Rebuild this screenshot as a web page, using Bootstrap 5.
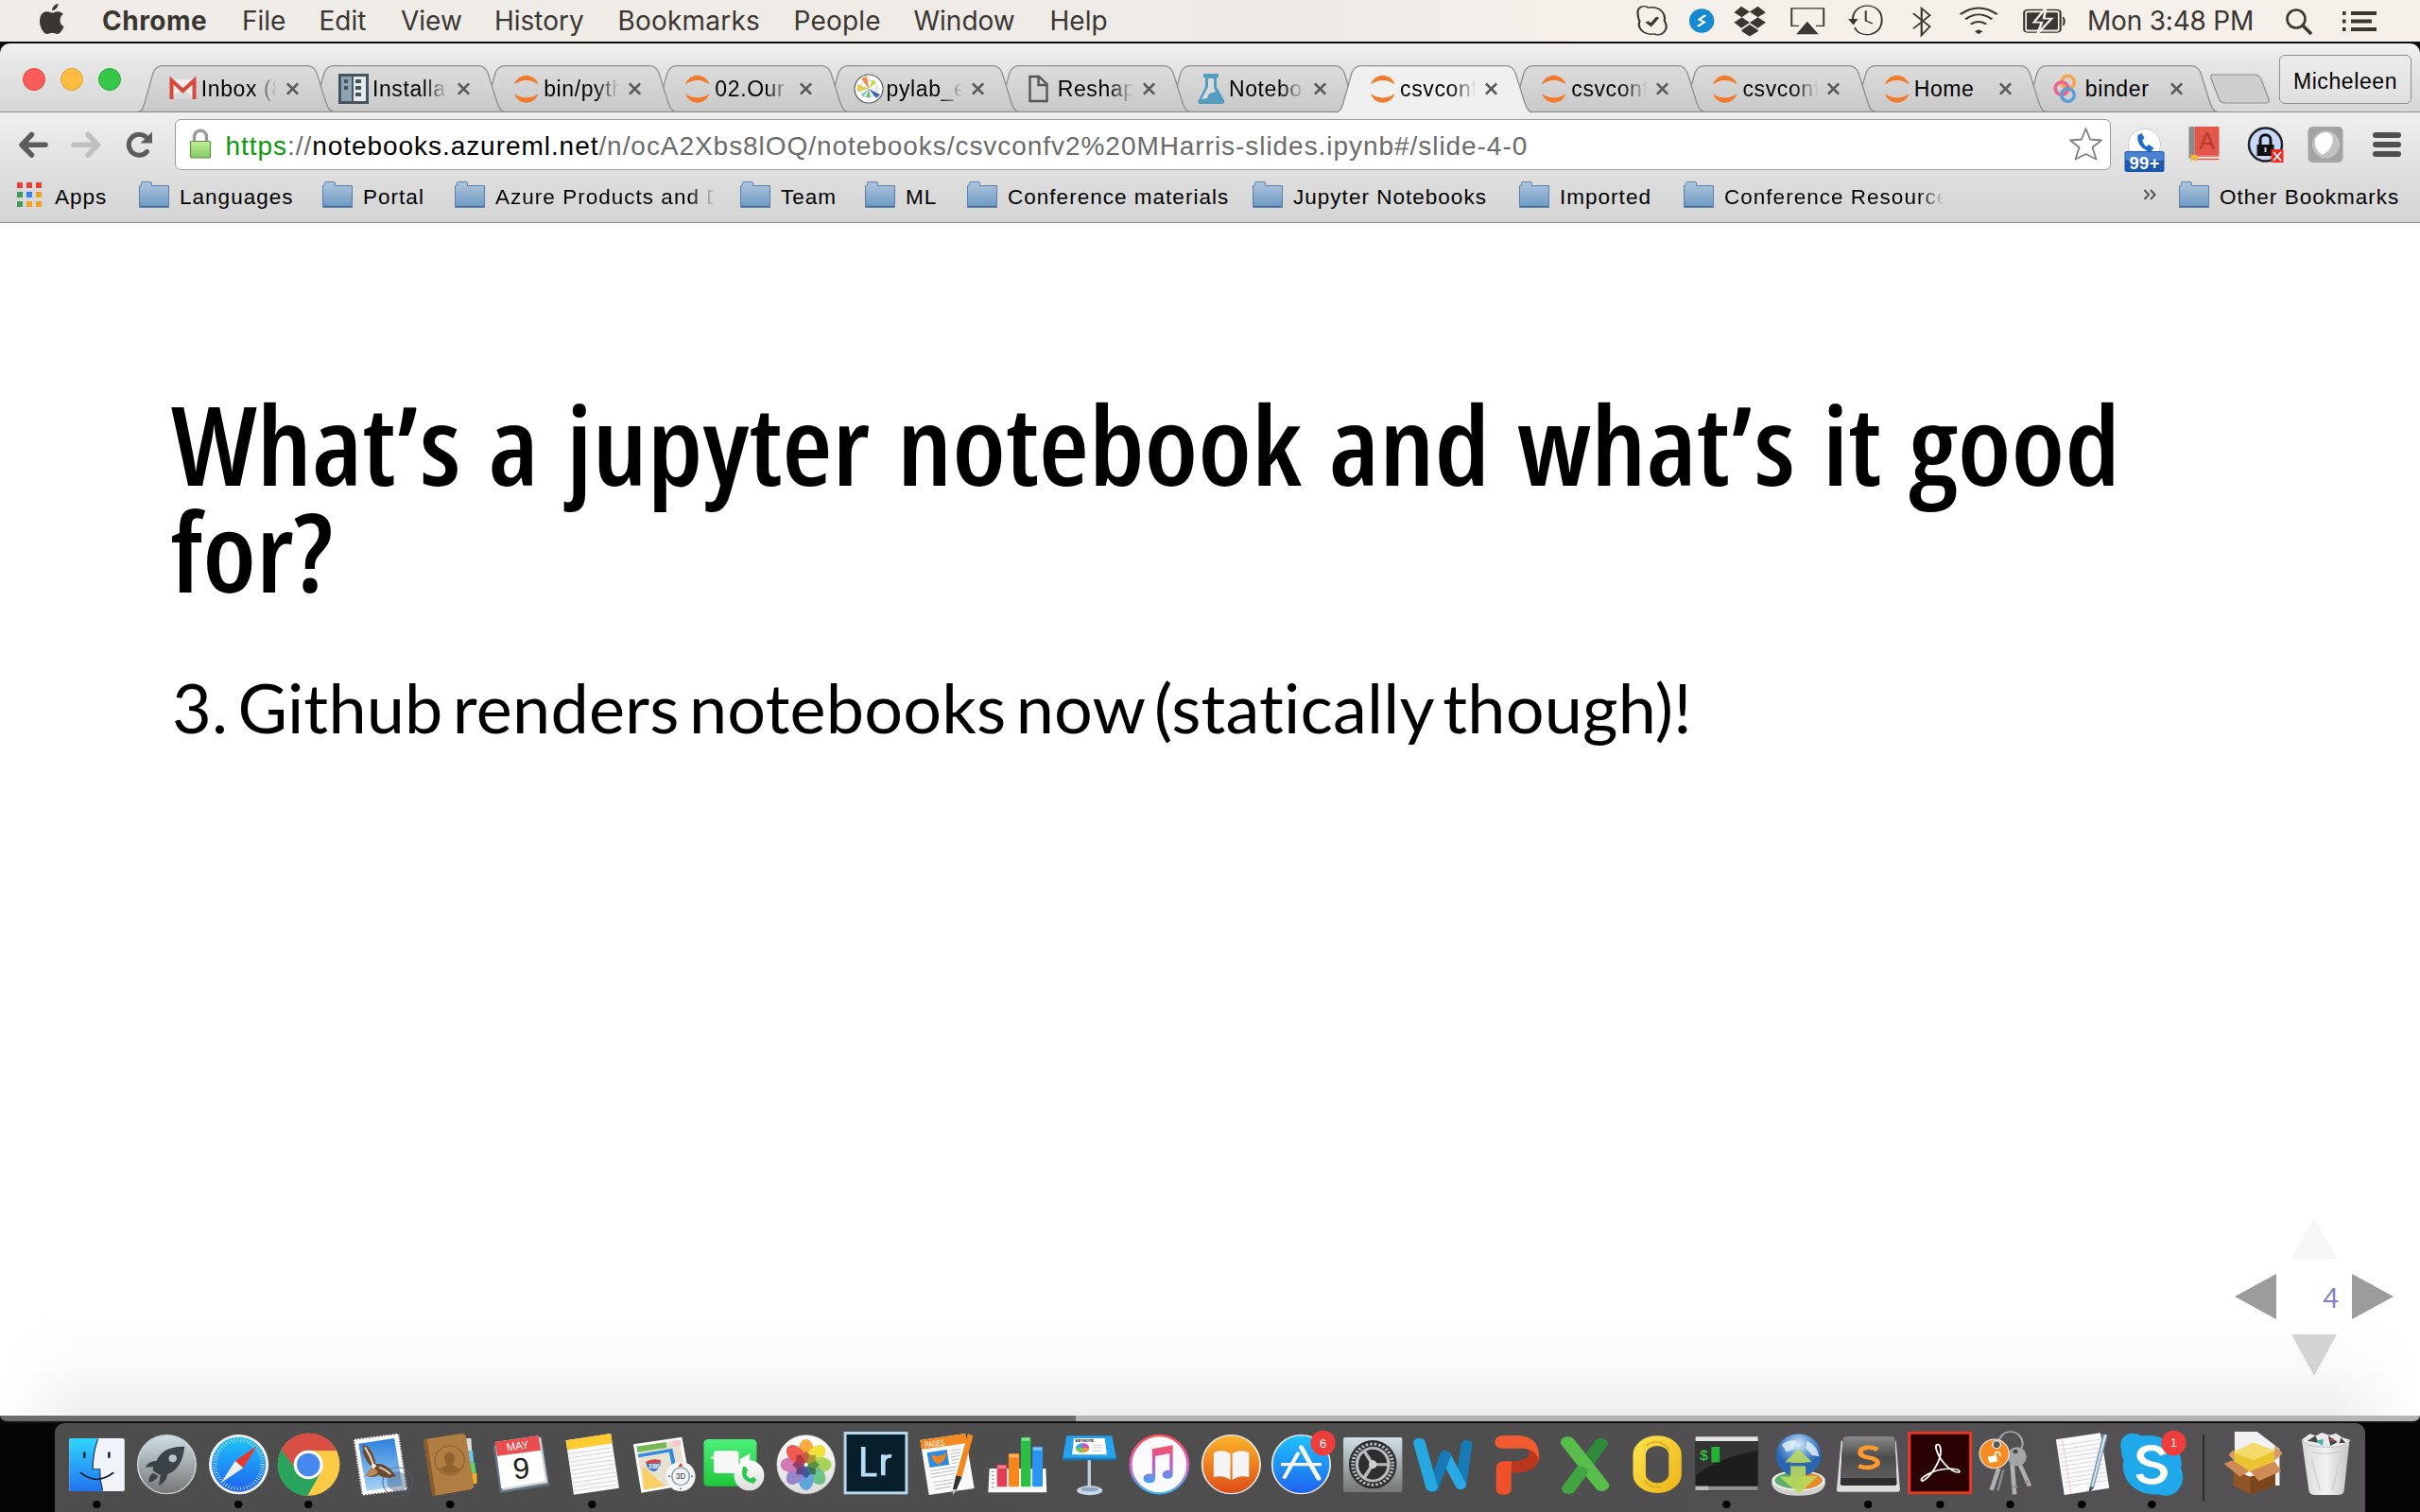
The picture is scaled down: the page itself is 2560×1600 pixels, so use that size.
<!DOCTYPE html>
<html lang="en">
<head>
<meta charset="utf-8">
<title>csvconfv2 MHarris-slides</title>
<link href="https://cdn.jsdelivr.net/npm/bootstrap@5.3.0/dist/css/bootstrap.min.css" rel="stylesheet">
<style>
body{width:2560px;height:1600px;overflow:hidden;background:#050505;font-family:"Liberation Sans",Arial,sans-serif;color:#000;line-height:1}
svg{display:block;overflow:visible;flex:none}
.menubar{height:44px;background:linear-gradient(90deg,#f0ece7,#eeebe7 55%,#f5f0ea 65%,#f5f0ea);color:#3a3632;font-family:Inter,"Liberation Sans",sans-serif;font-size:28px;padding-left:38px;white-space:nowrap}
.menubar .m-item{flex:none}
.m-item:nth-child(2){width:148px;font-weight:700;letter-spacing:.5px}
.m-item:nth-child(3){width:81.5px}.m-item:nth-child(4){width:86.5px}.m-item:nth-child(5){width:99px}
.m-item:nth-child(6){width:130.5px}.m-item:nth-child(7){width:186px;letter-spacing:.2px}.m-item:nth-child(8){width:127px;letter-spacing:.2px}
.m-item:nth-child(9){width:144px}.m-clock{width:207px;letter-spacing:-.2px;padding-left:11px}
.browser{height:1462px;border-top:2px solid #0c0c0c;background:#0c0c0c}
.tabstrip{height:73px;background:linear-gradient(#f0f0f0,#e6e6e6 30%,#d7d7d7);border-radius:10px 10px 0 0;border-bottom:1px solid #8f8f8f;position:relative;flex:none}
.lights{width:162px;padding-left:24px;gap:16px;height:76px;flex:none}
.lights i{width:24px;height:24px;border-radius:50%;display:block}
.c-red{background:#fc5c57;border:1px solid #e0443e}.c-yel{background:#fdbb40;border:1px solid #dea035}.c-grn{background:#34c748;border:1px solid #27a837}
.ctab{position:relative;width:181.2px;height:50px;margin-top:23px;flex:none;padding-left:16.8px}
.ctab>.tabshape{position:absolute;left:-17px;top:0;z-index:0}
.ctab>.fav,.ctab>.tabtitle,.ctab>.tabx{position:relative;z-index:1}
.ctab:nth-child(2){z-index:20}.ctab:nth-child(3){z-index:19}.ctab:nth-child(4){z-index:18}.ctab:nth-child(5){z-index:17}.ctab:nth-child(6){z-index:16}.ctab:nth-child(7){z-index:15}.ctab:nth-child(8){z-index:14}.ctab:nth-child(10){z-index:12}.ctab:nth-child(11){z-index:11}.ctab:nth-child(12){z-index:10}.ctab:nth-child(13){z-index:9}
.ctab.current{z-index:30}
.tabtitle{width:80px;margin-left:2px;overflow:hidden;white-space:nowrap;font-size:23px;letter-spacing:.6px;line-height:30px}
.fadeout{-webkit-mask-image:linear-gradient(90deg,#000 calc(100% - 26px),transparent);mask-image:linear-gradient(90deg,#000 calc(100% - 26px),transparent)}
.tabx{margin-left:9px}
.newtab{margin:31px 0 0 1px}
.profile{width:140px;height:52px;margin:12px 9px 0 auto;border:1px solid #8e8e8e;border-radius:6px;background:linear-gradient(#ececec,#e0e0e0);font-size:23px;letter-spacing:.6px;line-height:54px;text-align:center;flex:none}
.toolbar{height:68px;background:linear-gradient(#efefef,#dedede);padding-left:20px;flex:none}
.omnibox{width:2048px;height:54px;border:1.5px solid #9c9c9c;border-radius:6px;background:#fff;font-size:28px;letter-spacing:.95px;padding-left:14px;margin-left:20.5px;white-space:nowrap;color:#6b6b6b}
.omnibox>span{padding-top:3px;margin-left:-1px}
.omnibox .scheme{color:#0a9a0a}.omnibox .host{color:#000}
.bookmarks{height:49px;background:linear-gradient(#dedede,#d4d4d4);border-bottom:1.5px solid #8c8c8c;padding-left:18px;font-size:22.5px;letter-spacing:1.02px;white-space:nowrap;padding-bottom:9.5px;flex:none}
.bk{gap:11px;flex:none}.bk>span{padding-top:5px}
.bk:nth-child(1){gap:14px;width:129px}.bk:nth-child(2){width:194px}.bk:nth-child(3){width:140px}.bk:nth-child(4){width:302px}.bk:nth-child(5){width:132px}.bk:nth-child(6){width:108px}.bk:nth-child(7){width:302px}.bk:nth-child(8){width:282px}.bk:nth-child(9){width:174px}.bk:nth-child(10){width:486px}.bk:nth-child(11){width:38px}
.bkclip{width:232px;overflow:hidden;line-height:30px}
.slide{height:1262px;background:#fff;position:relative;padding:177px 180px 0 181px;flex:none}
.slide::before{content:"";position:absolute;left:0;right:0;bottom:0;height:110px;background:linear-gradient(rgba(0,0,0,0),rgba(0,0,0,.02) 50%,rgba(0,0,0,.065));-webkit-mask-image:linear-gradient(90deg,transparent,#000 90px,#000 2470px,transparent);mask-image:linear-gradient(90deg,transparent,#000 90px,#000 2470px,transparent)}
.slide h1{font-family:"Open Sans","Noto Sans",sans-serif;font-stretch:75%;font-weight:640;font-size:116px;line-height:113px;letter-spacing:-.1px;word-spacing:6.5px;margin:0;color:#000;white-space:nowrap;transform:scaleX(1.055);transform-origin:left}
.slide p{font-family:Lato,sans-serif;font-size:72px;line-height:90px;letter-spacing:.2px;word-spacing:-8.4px;margin:64px 0 0 1px;white-space:nowrap}
.controls{position:absolute;left:2360px;top:1047px}
.loadbar{height:8px;background:linear-gradient(90deg,#6b6b6b 1138px,#b4b4b4 1138px);border-radius:0 0 8px 8px;border-bottom:2px solid #111;flex:none}
.dock{height:94px;margin:0 58px;background:linear-gradient(90deg,#4e4d4e,#4f4e4f 60%,#555255);border-radius:10px 10px 0 0;padding-left:6.5px}
.dock svg{width:75px;height:94px}
.dock .sep{width:31px;height:70px;margin-top:12px}.dock .sep i{display:block;width:2px;height:70px;background:#2b2b2b;margin-left:15px}
.dock .bin{margin-left:2px}
.dock text,.tb text{font-family:"Liberation Sans",sans-serif}
</style>
<script src="https://cdn.jsdelivr.net/npm/bootstrap@5.3.0/dist/js/bootstrap.bundle.min.js"></script>
</head>
<body class="d-flex flex-column m-0">
<svg width="0" height="0" class="position-absolute">
<defs>
<linearGradient id="gTab" x2="0" y2="1"><stop stop-color="#dcdcdd"/><stop offset="1" stop-color="#c9c9ca"/></linearGradient>
<linearGradient id="gFold" x2="0" y2="1"><stop stop-color="#afc6de"/><stop offset="1" stop-color="#6d98c2"/></linearGradient>
<linearGradient id="gBlue" x2="0" y2="1"><stop stop-color="#1fc3fb"/><stop offset="1" stop-color="#1f63ef"/></linearGradient>
<linearGradient id="gFace" x2="0" y2="1"><stop stop-color="#2fd6ff"/><stop offset="1" stop-color="#2173ef"/></linearGradient>
<linearGradient id="gSilver" x2="0" y2="1"><stop stop-color="#cfe0e6"/><stop offset="1" stop-color="#767675"/></linearGradient>
<linearGradient id="gGreen" x2="0" y2="1"><stop stop-color="#4bf07a"/><stop offset="1" stop-color="#1fc83c"/></linearGradient>
<linearGradient id="gOrange" x2="0" y2="1"><stop stop-color="#fdb52a"/><stop offset="1" stop-color="#dd4b17"/></linearGradient>
<linearGradient id="gNote" x2="0" y2="1"><stop stop-color="#f9505c"/><stop offset=".5" stop-color="#c15fd0"/><stop offset="1" stop-color="#3fa5f5"/></linearGradient>
<linearGradient id="gRing" x2="0" y2="1"><stop stop-color="#ff4f56"/><stop offset=".5" stop-color="#e05fc0"/><stop offset="1" stop-color="#36b6f9"/></linearGradient>
<linearGradient id="gSky" x2="0" y2="1"><stop stop-color="#2a7fdc"/><stop offset="1" stop-color="#a8d5f5"/></linearGradient>
<linearGradient id="gWhite" x2="0" y2="1"><stop stop-color="#fff"/><stop offset="1" stop-color="#dcdcdc"/></linearGradient>
<linearGradient id="gDark" x2="0" y2="1"><stop stop-color="#8a8a8a"/><stop offset=".5" stop-color="#4c4c4c"/><stop offset="1" stop-color="#5c5c5c"/></linearGradient>
<linearGradient id="gBin" x2="1" y2="0"><stop stop-color="#d8d8d8"/><stop offset=".5" stop-color="#f2f2f2"/><stop offset="1" stop-color="#c4c4c4"/></linearGradient>
<linearGradient id="gLock" x2="0" y2="1"><stop stop-color="#bff091"/><stop offset="1" stop-color="#84c968"/></linearGradient>
<linearGradient id="gO" x2="1" y2="1"><stop stop-color="#fbe04a"/><stop offset="1" stop-color="#eeb81a"/></linearGradient>
<radialGradient id="gGlobe" cx=".5" cy=".25"><stop stop-color="#dcecfa"/><stop offset=".5" stop-color="#6ba3dc"/><stop offset="1" stop-color="#2c66b0"/></radialGradient>
<symbol id="tabshape" viewBox="0 0 208 50"><path d="M0 49.500C5 49 6 46 8 40L17 8Q20 .7 27 .7H180Q187 .7 190 8L200 40Q203 49 208 49.500Z" fill="url(#gTab)" stroke="#8f8f8f" stroke-width="1.300"/></symbol>
<symbol id="tabx" viewBox="0 0 16 16"><path d="M2 2L14 14M14 2L2 14" stroke="#5b5b5b" stroke-width="3"/></symbol>
<symbol id="jup" viewBox="0 0 32 32"><path d="M3 11.500A13.200 13.200 0 0 1 28.500 11.500A17 13 0 0 0 3 11.500ZM3 21A13.200 13.200 0 0 0 28.500 21A17 13 0 0 1 3 21Z" fill="#f37a2b"/></symbol>
<symbol id="folder" viewBox="0 0 32 28"><path d="M2.500 4V1.500Q2.500 .5 3.500 .5H12Q13.500 .5 13.500 2V4.500H31.500V27.300H.5V4.500Z" fill="url(#gFold)" stroke="#5880a8"/><path d="M1 26.500H31" stroke="#456c94" stroke-width="1.200"/></symbol>
</defs></svg>

<nav class="menubar d-flex align-items-center">
<svg class="m-item" width="70" height="44" viewBox="0 0 70 44"><path d="M23.500 4C23.500 8 20.500 11 17 11C17 7.500 20 4.500 23.500 4ZM29 15C26.500 12.500 23.500 12 21.500 12.500C19.500 13 18 13.500 17 13.500S13.500 12.300 11.500 12.300C7 12.300 4 16.500 4 22.500C4 29.500 8.500 36 12 36C14 36 15 34.800 17.300 34.800S20.500 36 22.500 36C25.500 36 28.500 31.500 29.500 28C24.500 26 24 18 29 15Z" fill="#3a3632"/></svg>
<span class="m-item">Chrome</span><span class="m-item">File</span><span class="m-item">Edit</span><span class="m-item">View</span><span class="m-item">History</span><span class="m-item">Bookmarks</span><span class="m-item">People</span><span class="m-item">Window</span><span class="m-item">Help</span>
<div class="ms-auto d-flex align-items-center">
<svg width="51.600" height="44" viewBox="44 0 94 130" preserveAspectRatio="none" fill="none" stroke="#3a3632" stroke-width="4"><path d="M60 48C56 20 72 14 80 24C100 18 114 40 111 66C122 92 104 118 92 106C70 112 58 86 63 66Q60 56 60 48Z"/><path d="M77 68L85 78L98 54" stroke-width="7"/></svg>
<svg width="48.300" height="44" viewBox="138 0 88 130" preserveAspectRatio="none"><ellipse cx="182" cy="65" rx="24" ry="38" fill="#158ad2"/><path d="M188 49L177 61M187 69L176 81M177 61L187 69" stroke="#fff" stroke-width="5.500" fill="none" stroke-linecap="round"/></svg>
<svg width="57" height="44" viewBox="226 0 104 130" preserveAspectRatio="none" fill="#3a3632"><path d="M259 20L275 37L260 54L245 39ZM291 20L306 39L291 54L275 37ZM260 54L275 71L259 88L245 70ZM291 54L306 70L291 88L275 71ZM260 93L275 77L291 93V98L275 114L260 98Z"/></svg>
<svg width="61.400" height="44" viewBox="330 0 112 130" preserveAspectRatio="none"><path d="M370 81H356V26H418V81H403" fill="none" stroke="#3a3632" stroke-width="3.500"/><path d="M386 67L408 107H365Z" fill="#3a3632"/></svg>
<svg width="64.700" height="44" viewBox="442 0 118 130" preserveAspectRatio="none"><path d="M473 64C471 4 529 2 529 62C529 118 484 120 477 86M498 33V65L511 74" fill="none" stroke="#3a3632" stroke-width="3.600"/><path d="M464 59H483L474 78Z" fill="#3a3632"/></svg>
<svg width="46.600" height="44" viewBox="560 0 85 130" preserveAspectRatio="none"><path d="M591 42L623 83L607 110V26L623 48L591 90" fill="none" stroke="#3a3632" stroke-width="4"/></svg>
<svg width="73" height="44" viewBox="645 0 133 130" preserveAspectRatio="none" fill="none" stroke="#3a3632" stroke-width="5.500"><path d="M681 45Q716 5 752 45M691 60Q716 31 742 60M701 76Q716 60 731 76"/><path d="M709 98L716 107L724 98Q716 88 709 98Z" fill="#3a3632" stroke="none"/></svg>
<svg width="70.200" height="44" viewBox="778 0 128 130" preserveAspectRatio="none"><rect x="804" y="31" width="70" height="70" rx="8" fill="none" stroke="#3a3632" stroke-width="4"/><rect x="809" y="39" width="60" height="54" rx="3" fill="#3a3632"/><path d="M879 53Q885 66 879 80" fill="#3a3632" stroke="#3a3632" stroke-width="3"/><path d="M846 24L823 70H838L830 105L857 58H842Z" fill="#3a3632" stroke="#f4efe9" stroke-width="5"/></svg>
<span class="m-clock">Mon 3:48 PM</span>
<svg width="156" height="44" viewBox="0 0 156 44" fill="none" stroke="#3a3632"><circle cx="25" cy="20" r="9.500" stroke-width="2.600"/><path d="M32 27L41 36" stroke-width="3.500"/><path d="M83 14H110M83 22.500H105M83 31H110" stroke-width="3.800"/><path d="M74 14H77.500M74 22.500H77.500M74 31H77.500" stroke-width="3.800"/></svg>
</div>
</nav>

<main class="browser d-flex flex-column">
<div class="tabstrip d-flex">
<div class="lights d-flex align-items-center"><i class="c-red"></i><i class="c-yel"></i><i class="c-grn"></i></div>
<div class="ctab d-flex align-items-center"><svg class="tabshape" width="208" height="50"><use href="#tabshape"/></svg>
<svg class="fav" width="32" height="32"><path d="M1 6H28V27H1Z" fill="#eee"/><path d="M1 27L14.500 15L28 27Z" fill="#d9d9d9"/><path d="M2.500 27V7L14.500 18L26.500 7V27" fill="none" stroke="#d8483b" stroke-width="4"/></svg><span class="tabtitle fadeout">Inbox (8</span><svg class="tabx" width="15" height="16"><use href="#tabx"/></svg></div>
<div class="ctab d-flex align-items-center"><svg class="tabshape" width="208" height="50"><use href="#tabshape"/></svg>
<svg class="fav" width="32" height="32"><g transform="translate(-2)"><path d="M0 0H32V32H0Z" fill="#46545e"/><path d="M3 3H14V29H3Z" fill="#8fa3b3"/><path d="M16 3H29V29H16Z" fill="#e6ebee"/><path d="M6 6H10V10H6ZM6 13H10V17H6ZM18 6H24V10H18ZM18 13H24V17H18ZM18 20H24V24H18Z" fill="#46545e"/></g></svg><span class="tabtitle fadeout">Installat</span><svg class="tabx" width="15" height="16"><use href="#tabx"/></svg></div>
<div class="ctab d-flex align-items-center"><svg class="tabshape" width="208" height="50"><use href="#tabshape"/></svg><svg class="fav" width="32" height="32"><use href="#jup"/></svg><span class="tabtitle fadeout">bin/pyth</span><svg class="tabx" width="15" height="16"><use href="#tabx"/></svg></div>
<div class="ctab d-flex align-items-center"><svg class="tabshape" width="208" height="50"><use href="#tabshape"/></svg><svg class="fav" width="32" height="32"><use href="#jup"/></svg><span class="tabtitle fadeout">02.Our</span><svg class="tabx" width="15" height="16"><use href="#tabx"/></svg></div>
<div class="ctab d-flex align-items-center"><svg class="tabshape" width="208" height="50"><use href="#tabshape"/></svg>
<svg class="fav" width="32" height="32"><g transform="translate(-1)"><circle cx="16" cy="16" r="15" fill="#fff" stroke="#555" stroke-width="1.200"/><circle cx="16" cy="16" r="9" fill="none" stroke="#ccc"/><path d="M16 1V31M1 16H31" stroke="#ddd"/><path d="M16 16L8 5L14 3Z" fill="#f08a4a"/><path d="M16 16L4 19V11Z" fill="#e8c84a"/><path d="M16 16L20 6L24 9Z" fill="#c6d84a"/><path d="M16 16L28 22L24 26Z" fill="#3a66b8"/><path d="M16 16L13 25H18Z" fill="#6cc07a"/><path d="M16 16L8 22L10 25Z" fill="#7cc6c0"/></g></svg><span class="tabtitle fadeout">pylab_ex</span><svg class="tabx" width="15" height="16"><use href="#tabx"/></svg></div>
<div class="ctab d-flex align-items-center"><svg class="tabshape" width="208" height="50"><use href="#tabshape"/></svg>
<svg class="fav" width="32" height="32"><path d="M4.500 3H14L22.500 11V29H4.500ZM13.500 3V12H22" fill="none" stroke="#555" stroke-width="2.400"/></svg><span class="tabtitle fadeout">Reshape</span><svg class="tabx" width="15" height="16"><use href="#tabx"/></svg></div>
<div class="ctab d-flex align-items-center"><svg class="tabshape" width="208" height="50"><use href="#tabshape"/></svg>
<svg class="fav" width="32" height="32"><path d="M7 0H23V4H21V14L29 28Q30 32 26 32H4Q0 32 2 28L9 14V4H7Z" fill="#549dbf"/><path d="M12 5H18V15L20 19L13 21L11 26L5 27L12 14Z" fill="#dcdcdd"/></svg><span class="tabtitle fadeout">Noteboo</span><svg class="tabx" width="15" height="16"><use href="#tabx"/></svg></div>
<div class="ctab current d-flex align-items-center"><svg class="tabshape" width="208" height="51" viewBox="0 0 208 51"><path d="M0 50C5 49 6 46 8 40L17 8Q20 .7 27 .7H180Q187 .7 190 8L200 40Q203 49 208 50V52H0Z" fill="#f0f0f0"/><path d="M0 50C5 49 6 46 8 40L17 8Q20 .7 27 .7H180Q187 .7 190 8L200 40Q203 49 208 50" fill="none" stroke="#8f8f8f" stroke-width="1.300"/></svg><svg class="fav" width="32" height="32"><use href="#jup"/></svg><span class="tabtitle fadeout">csvconf</span><svg class="tabx" width="15" height="16"><use href="#tabx"/></svg></div>
<div class="ctab d-flex align-items-center"><svg class="tabshape" width="208" height="50"><use href="#tabshape"/></svg><svg class="fav" width="32" height="32"><use href="#jup"/></svg><span class="tabtitle fadeout">csvconf</span><svg class="tabx" width="15" height="16"><use href="#tabx"/></svg></div>
<div class="ctab d-flex align-items-center"><svg class="tabshape" width="208" height="50"><use href="#tabshape"/></svg><svg class="fav" width="32" height="32"><use href="#jup"/></svg><span class="tabtitle fadeout">csvconf</span><svg class="tabx" width="15" height="16"><use href="#tabx"/></svg></div>
<div class="ctab d-flex align-items-center"><svg class="tabshape" width="208" height="50"><use href="#tabshape"/></svg><svg class="fav" width="32" height="32"><use href="#jup"/></svg><span class="tabtitle">Home</span><svg class="tabx" width="15" height="16"><use href="#tabx"/></svg></div>
<div class="ctab d-flex align-items-center"><svg class="tabshape" width="208" height="50"><use href="#tabshape"/></svg>
<svg class="fav" width="32" height="32" fill="none" stroke-width="3.600"><circle cx="15.500" cy="9" r="6.800" stroke="#f7a54a"/><circle cx="9" cy="15.500" r="6.800" stroke="#e8648a"/><circle cx="15.500" cy="22.500" r="6.800" stroke="#5a9fd4"/></svg><span class="tabtitle">binder</span><svg class="tabx" width="15" height="16"><use href="#tabx"/></svg></div>
<svg class="newtab" width="66" height="34"><path d="M4 2H48Q53 2 55 7L63 28Q64 32 60 32H17Q12 32 10 27L2 6Q1 2 4 2Z" fill="#cfcfcf" stroke="#8e8e8e" stroke-width="1.200"/></svg>
<div class="profile">Micheleen</div>
</div>

<div class="toolbar tb d-flex align-items-center">
<svg width="144" height="40"><g fill="none" stroke="#5c5c5c" stroke-width="5.500" stroke-linecap="round" stroke-linejoin="round"><path d="M13.500 9.500L3 20.300L13.500 31M4 20.300H28"/><path d="M73 9.500L83.500 20.300L73 31M82 20.300H58" stroke="#c0c0c0"/><path d="M134 11.500A11 11 0 1 0 135.500 27.500" stroke-width="5"/></g><path d="M141 6.500V18.500H128.500Z" fill="#5c5c5c"/></svg>
<div class="omnibox d-flex align-items-center"><svg width="40" height="40"><path d="M5.500 17V12C5.500 3 18.500 3 18.500 12V17" fill="none" stroke="#9a9a9a" stroke-width="3.400"/><rect x="1.500" y="16.500" width="21" height="17.500" rx="1.500" fill="url(#gLock)" stroke="#5c9440" stroke-width="1.200"/></svg><span><span class="scheme">https</span>://<span class="host">notebooks.azureml.net</span>/n/ocA2Xbs8lOQ/notebooks/csvconfv2%20MHarris-slides.ipynb#/slide-4-0</span>
<svg class="ms-auto me-1" width="42" height="44"><path d="M20.500 5L25 16.500L37 17.500L27.500 25L31.500 37.500L20.500 32L9.500 37.500L13.500 25L4 17.500L16 16.500Z" fill="#fff" stroke="#808080" stroke-width="1.800" stroke-linejoin="round"/></svg></div>
<svg width="310" height="62" viewBox="2233.500 125 310 62"><circle cx="2269" cy="156" r="17" fill="#fdfdfd" stroke="#ccc"/><path d="M2262 146Q2260 158 2275 164L2279 160L2274 156L2271 158Q2267 155 2267 151L2269 149L2266 144Z" fill="#1e6cd2"/><rect x="2248" y="163" width="42" height="22" rx="2.500" fill="#1c56b0"/><rect x="2249" y="164" width="40" height="9" rx="2" fill="#4a82d2"/><text x="2269" y="181.500" text-anchor="middle" font-size="18.500" font-weight="700" fill="#fff" textLength="32">99+</text>
<path d="M2316 137H2322V168L2316 171Z" fill="#8a8a8a"/><path d="M2322 137H2348V167H2322Z" fill="#e2574a"/><text x="2335" y="161" text-anchor="middle" font-size="25" fill="#b8392f">A</text><path d="M2322 168H2348V173H2322Z" fill="#f0e6e0"/><path d="M2320 171.500H2348M2324 168H2348" stroke="#e2574a" stroke-width="1.500"/><path d="M2318 167H2325V174L2321 171L2318 174Z" fill="#f2b632"/>
<circle cx="2397" cy="156" r="17.500" fill="#c7d7fa" stroke="#222" stroke-width="2.500"/><path d="M2388 156H2406V168H2388Z" fill="#111"/><path d="M2391.500 157V151C2391.500 144 2402.500 144 2402.500 151V157" fill="none" stroke="#111" stroke-width="3"/><path d="M2396 159H2398V164H2396Z" fill="#c7d7fa"/><rect x="2403" y="161" width="13" height="14" fill="#ef2b23"/><path d="M2405.500 164L2413.500 173M2413.500 164L2405.500 173" stroke="#fff" stroke-width="1.800"/>
<rect x="2442" y="137" width="37" height="38" rx="5" fill="#a3a3a3"/><circle cx="2461" cy="156" r="14.500" fill="#c2c2c2"/><path d="M2450 149Q2460 138 2468 147Q2470 160 2457 167Q2447 160 2450 149Z" fill="#fff"/>
<path d="M2513.500 146H2537.500M2513.500 156H2537.500M2513.500 166H2537.500" stroke="#4f4f4f" stroke-width="6" stroke-linecap="round"/></svg>
</div>

<div class="bookmarks d-flex align-items-center">
<div class="bk d-flex align-items-center"><svg width="26" height="28"><path d="M0 1H6V7H0ZM10 1H16V7H10ZM20 1H26V7H20Z" fill="#ea4037"/><path d="M0 11H6V17H0ZM0 21H6V27H0Z" fill="#3b9d58"/><path d="M10 11H16V17H10Z" fill="#2c84ee"/><path d="M20 11H26V17H20ZM10 21H16V27H10ZM20 21H26V27H20Z" fill="#f0a224"/></svg><span>Apps</span></div>
<div class="bk d-flex align-items-center"><svg width="32" height="28"><use href="#folder"/></svg><span>Languages</span></div>
<div class="bk d-flex align-items-center"><svg width="32" height="28"><use href="#folder"/></svg><span>Portal</span></div>
<div class="bk d-flex align-items-center"><svg width="32" height="28"><use href="#folder"/></svg><span class="bkclip fadeout">Azure Products and De</span></div>
<div class="bk d-flex align-items-center"><svg width="32" height="28"><use href="#folder"/></svg><span>Team</span></div>
<div class="bk d-flex align-items-center"><svg width="32" height="28"><use href="#folder"/></svg><span>ML</span></div>
<div class="bk d-flex align-items-center"><svg width="32" height="28"><use href="#folder"/></svg><span>Conference materials</span></div>
<div class="bk d-flex align-items-center"><svg width="32" height="28"><use href="#folder"/></svg><span>Jupyter Notebooks</span></div>
<div class="bk d-flex align-items-center"><svg width="32" height="28"><use href="#folder"/></svg><span>Imported</span></div>
<div class="bk d-flex align-items-center"><svg width="32" height="28"><use href="#folder"/></svg><span class="bkclip fadeout">Conference Resources</span></div>
<div class="bk d-flex align-items-center"><svg width="14" height="16"><path d="M1.500 3L6 8L1.500 13M8 3L12.500 8L8 13" fill="none" stroke="#555" stroke-width="2"/></svg></div>
<div class="bk d-flex align-items-center"><svg width="32" height="28"><use href="#folder"/></svg><span>Other Bookmarks</span></div>
</div>

<section class="slide">
<h1>What’s a jupyter notebook and what’s it good<br>for?</h1>
<p>3. Github renders notebooks now (statically though)!</p>
<svg class="controls" width="176" height="176" viewBox="2360 1283 176 176"><path d="M2364 1372L2408 1348V1396Z" fill="#9c9c9c"/><path d="M2532 1372L2488 1348V1396Z" fill="#9c9c9c"/><path d="M2448 1288L2472 1332H2424Z" fill="#f7f7f7"/><path d="M2448 1456L2472 1412H2424Z" fill="#d3d3d3"/><text x="2457.500" y="1384" font-family="Lato,sans-serif" font-size="28.500" fill="#8080c8">4</text></svg>
</section>
<div class="loadbar"></div>
</main>

<footer class="dock d-flex">
<svg viewBox="153.300 78 178.200 282" preserveAspectRatio="none"><rect x="173" y="126" width="139" height="168" rx="5" fill="#f1f5fb"/><path d="M178 126H245Q232 172 232 224H250Q249 260 257 294H178Q173 294 173 288V132Q173 126 178 126Z" fill="url(#gFace)"/><path d="M245 128Q232 172 232 224H250Q249 260 257 292" fill="none" stroke="#1b3c66" stroke-width="3"/><path d="M211 172V186M273 172V186" stroke="#102236" stroke-width="6" stroke-linecap="round"/><path d="M202 236Q242 276 283 236" fill="none" stroke="#102236" stroke-width="5" stroke-linecap="round"/><ellipse cx="242" cy="336" rx="10" ry="12"/></svg>
<svg viewBox="331.500 78 178.200 282" preserveAspectRatio="none"><ellipse cx="418" cy="209" rx="73" ry="93" fill="url(#gSilver)" stroke="#c3cfd4" stroke-width="4"/><path d="M463 152Q408 150 392 198Q374 196 364 218L384 216Q378 232 402 242L398 276Q418 264 420 240Q456 224 463 152ZM384 236Q370 246 374 266Q390 262 396 246Z" fill="#3a4347"/><ellipse cx="433" cy="190" rx="10" ry="12" fill="#b7c3c8"/></svg>
<svg viewBox="509.700 78 178.200 282" preserveAspectRatio="none"><ellipse cx="599" cy="209" rx="75" ry="95" fill="#f2f2f2"/><ellipse cx="599" cy="209" rx="68" ry="87" fill="url(#gBlue)"/><ellipse cx="599" cy="209" rx="60" ry="77" fill="none" stroke="#d5efff" stroke-width="11" stroke-dasharray="1.800 6"/><path d="M645 150L590 198L610 220Z" fill="#e8372c"/><path d="M554 268L590 198L610 220Z" fill="#eee"/><ellipse cx="598" cy="336" rx="10" ry="12"/></svg>
<svg viewBox="687.900 78 178.200 282" preserveAspectRatio="none"><ellipse cx="775" cy="209" rx="78" ry="99" fill="#fdca45"/><path d="M706 164C724 122 750 110 775 110C805 110 832 130 844 165H775L738 220Z" fill="#d94f44"/><path d="M707 162C690 200 694 244 716 276C734 300 752 308 772 308L806 232L740 222Z" fill="#2aa45c"/><ellipse cx="774" cy="210" rx="37" ry="46" fill="#fff"/><ellipse cx="774" cy="210" rx="29" ry="37" fill="#4788ef"/><ellipse cx="774" cy="336" rx="10" ry="12"/></svg>
<svg viewBox="866.100 78 178.200 282" preserveAspectRatio="none"><path d="M890 131L999 113L1020 288L911 305Z" fill="#fff" stroke="#fff" stroke-width="6" stroke-dasharray="4 4"/><path d="M900 143L990 126L1010 277L920 293Z" fill="url(#gSky)"/><ellipse cx="998" cy="264" rx="37" ry="46" fill="none" stroke="#555f6e" stroke-width="3" opacity=".7"/><ellipse cx="998" cy="264" rx="26" ry="32" fill="#4a5f80" opacity=".45"/><path d="M912 148C928 146 938 178 944 208C962 202 984 224 994 246C976 256 960 250 950 242Q938 254 918 244Q926 228 934 218C916 196 906 168 912 148Z" fill="#6b4a2e"/><path d="M916 154Q930 180 938 212M952 218Q968 224 980 240" stroke="#e7dccb" stroke-width="5" fill="none"/><path d="M934 216Q948 226 948 238Q934 250 918 244Z" fill="#b98a52"/><ellipse cx="938" cy="214" rx="6" ry="7" fill="#f4efe6"/></svg>
<svg viewBox="1044.300 78 178.200 282" preserveAspectRatio="none"><path d="M1166 126H1183L1185 165H1172Z" fill="#d8dde0"/><path d="M1172 165H1187L1190 203H1175Z" fill="#6cc8e6"/><path d="M1176 203H1192L1195 236H1180Z" fill="#57d66a"/><path d="M1180 236H1197L1198 270H1180Z" fill="#f4ae2a"/><path d="M1063 130L1158 111Q1168 110 1170 119L1190 276Q1190 286 1180 289L1086 310Z" fill="#b07d42"/><path d="M1063 130L1072 128L1094 308L1086 310Z" fill="#8a5c2b"/><ellipse cx="1129" cy="196" rx="37" ry="46" fill="none" stroke="#8f6230" stroke-width="3"/><path d="M1129 170C1144 170 1146 196 1136 208Q1140 218 1158 222Q1130 254 1101 222Q1118 218 1122 208C1112 196 1114 170 1129 170Z" fill="#8f6230"/><ellipse cx="1130" cy="336" rx="10" ry="12"/></svg>
<svg viewBox="1222.500 78 178.200 282" preserveAspectRatio="none"><path d="M1238 150L1360 124L1380 276L1256 300Z" fill="#627280"/><path d="M1246 146L1358 122L1376 268L1262 292Z" fill="#cfd3d6"/><path d="M1243 138L1352 118L1370 262L1259 286Z" fill="#fff"/><path d="M1243 138L1352 118L1358 164L1249 182Z" fill="#ea4d4f"/><text x="1300" y="162" font-size="35" text-anchor="middle" fill="#fff" textLength="56" lengthAdjust="spacingAndGlyphs" transform="rotate(-9 1300 152)">MAY</text><text x="1309" y="254" font-size="94" text-anchor="middle" fill="#222" textLength="42" lengthAdjust="spacingAndGlyphs" transform="rotate(-4 1309 220)">9</text></svg>
<svg viewBox="1400.700 78 178.200 282" preserveAspectRatio="none"><path d="M1421 133L1534 111L1555 284L1441 305Z" fill="#fafafa"/><path d="M1421 133L1534 111L1538 142L1425 163Z" fill="#fdcb2f"/><path d="M1427 176L1540 155M1428 189L1541 168M1430 202L1543 181M1431 215L1545 194M1433 228L1546 207M1434 241L1548 220M1436 254L1549 233M1438 267L1551 246M1439 280L1552 259M1440 293L1554 272" stroke="#ccc" stroke-width="2"/><ellipse cx="1487" cy="336" rx="10" ry="12"/></svg>
<svg viewBox="58.200 78 178.200 282" preserveAspectRatio="none"><path d="M70 145L192 122L214 272L90 299Z" fill="#fff"/><path d="M78 152L186 131L204 266L96 290Z" fill="#e8e0d0"/><path d="M78 152L152 138L154 156L80 170Z" fill="#74b956"/><path d="M168 135L188 131L190 148L170 152Z" fill="#f3c4cc"/><path d="M92 212L150 278L96 290Z" fill="#f9d067"/><path d="M82 182L164 164L178 250" fill="none" stroke="#2f8be0" stroke-width="10"/><path d="M102 200Q120 190 138 196Q142 222 122 232Q102 226 102 200Z" fill="#3a76cf"/><path d="M102 200Q120 190 138 196L138 204L102 207Z" fill="#d8463e"/><text x="122" y="222" font-size="20" font-weight="700" text-anchor="middle" fill="#fff" textLength="28" lengthAdjust="spacingAndGlyphs">280</text><ellipse cx="189" cy="247" rx="37" ry="47" fill="#f5f5f5"/><ellipse cx="189" cy="247" rx="22" ry="28" fill="none" stroke="#6f8da0" stroke-width="3"/><text x="189" y="256" font-size="26" text-anchor="middle" fill="#333" textLength="24" lengthAdjust="spacingAndGlyphs">3D</text><path d="M189 204L195 216H183Z" fill="#e03a30"/><path d="M158 247H163M215 247H220M189 284V289" stroke="#333" stroke-width="3"/></svg>
<svg viewBox="236.400 78 178.200 282" preserveAspectRatio="none"><rect x="247" y="129" width="133" height="149" rx="12" fill="url(#gGreen)"/><rect x="272" y="166" width="63" height="71" rx="8" fill="#f7f7f7"/><path d="M338 192L363 174V230L338 212ZM266 184H271V192H266Z" fill="#f7f7f7"/><ellipse cx="361" cy="244" rx="38" ry="48" fill="url(#gWhite)"/><path d="M346 216Q334 258 372 270L380 258L372 248L364 254Q354 246 354 236L358 228L352 216Z" fill="#27cb4c"/></svg>
<svg viewBox="414.600 78 178.200 282" preserveAspectRatio="none"><ellipse cx="504" cy="209" rx="73" ry="93" fill="url(#gWhite)" stroke="#d5d5d5" stroke-width="2"/><g opacity=".9" transform="translate(504 210) scale(1 1.270)"><ellipse cy="-36" rx="19" ry="28" fill="#f9a32e"/><ellipse cy="-36" rx="19" ry="28" fill="#f1df2b" transform="rotate(45)"/><ellipse cy="-36" rx="19" ry="28" fill="#a4d048" transform="rotate(90)"/><ellipse cy="-36" rx="19" ry="28" fill="#5fbf7e" transform="rotate(135)"/><ellipse cy="-36" rx="19" ry="28" fill="#559fdd" transform="rotate(180)"/><ellipse cy="-36" rx="19" ry="28" fill="#8c7cc6" transform="rotate(225)"/><ellipse cy="-36" rx="19" ry="28" fill="#cb6fb0" transform="rotate(270)"/><ellipse cy="-36" rx="19" ry="28" fill="#ee4d3f" transform="rotate(315)"/><path d="M0 0L-10-24L0-34L10-24Z" fill="#b8552a"/><path d="M0 0L10-24L24-24L24-10Z" fill="#a88a20"/><path d="M0 0L24-10L34 0L24 10Z" fill="#4e8a2c"/><path d="M0 0L24 10L24 24L10 24Z" fill="#2a6a50"/><path d="M0 0L10 24L0 34L-10 24Z" fill="#2c4a94"/><path d="M0 0L-10 24L-24 24L-24 10Z" fill="#53327c"/><path d="M0 0L-24 10L-34 0L-24-10Z" fill="#8a2a5c"/><path d="M0 0L-24-10L-24-24L-10-24Z" fill="#b5202e"/><circle r="5" fill="#fff"/></g></svg>
<svg viewBox="592.800 78 178.200 282" preserveAspectRatio="none"><rect x="599" y="105" width="161" height="199" fill="#b6d8ec"/><rect x="606" y="114" width="147" height="181" fill="#071f2b"/><path d="M648 153V242H682M698 244V178M698 200Q702 180 719 183" fill="none" stroke="#b8dcf2" stroke-width="11"/></svg>
<svg viewBox="771 78 178.200 282" preserveAspectRatio="none"><path d="M791 132L904 111L927 285L813 306Z" fill="#fafafa"/><path d="M791 132L904 111L908 141L795 161Z" fill="#f68a22"/><text x="828" y="152" font-size="26" text-anchor="middle" fill="#fff" textLength="50" lengthAdjust="spacingAndGlyphs" transform="rotate(-9 828 144)">PAGES</text><path d="M808 172L858 162L864 210L815 219Z" fill="#2d8bdf"/><path d="M820 178Q838 190 856 172Q856 200 840 204L838 212L832 204Q820 198 820 178Z" fill="#f08423"/><path d="M866 166L892 161M867 176L891 171M868 186L890 181M869 196L888 192M870 206L886 202M816 230L882 216M818 240L880 227M820 250L878 238M824 266L874 256M826 277L872 267M828 288L868 279" stroke="#b4b4b4" stroke-width="2.500"/><path d="M911 112L924 118L896 248L881 244Z" fill="#f28a20"/><path d="M881 244L896 248L882 290L873 288Z" fill="#333"/><path d="M873 288L882 290L873 306Z" fill="#ccc"/></svg>
<svg viewBox="949.200 78 178.200 282" preserveAspectRatio="none"><path d="M965 222H1107L1109 298H962Z" fill="#fafafa"/><path d="M970 232H977M970 244H977M970 256H977M970 268H977M970 282H977" stroke="#888" stroke-width="3"/><rect x="984" y="209" width="25" height="71" rx="4" fill="#e53b57"/><rect x="1013" y="174" width="27" height="106" rx="4" fill="#f7861f"/><rect x="1044" y="122" width="25" height="158" rx="4" fill="#2bbf4a"/><rect x="1073" y="152" width="26" height="128" rx="4" fill="#2a94f2"/><path d="M986 212H1007V222H986Z" fill="#f47f8f"/><path d="M1015 177H1038V187H1015Z" fill="#fbb568"/><path d="M1046 125H1067V134H1046Z" fill="#86e698"/><path d="M1075 155H1097V164H1075Z" fill="#84c8fa"/></svg>
<svg viewBox="1127.400 78 178.200 282" preserveAspectRatio="none"><path d="M1212 194H1220V286H1212Z" fill="#c3cdd6"/><ellipse cx="1217" cy="292" rx="32" ry="15" fill="#c9d8e6"/><ellipse cx="1217" cy="288" rx="22" ry="7" fill="#8fa7bb"/><path d="M1159 118H1273L1284 190H1149Z" fill="#24a3ec"/><path d="M1149 188H1284V196H1149Z" fill="#1576bb"/><path d="M1177 126H1255L1260 178H1173Z" fill="#fff"/><text x="1204" y="138" font-size="12" font-weight="700" text-anchor="middle" textLength="46" lengthAdjust="spacingAndGlyphs">KEYNOTE</text><ellipse cx="1199" cy="157" rx="17" ry="15" fill="#35a8e8"/><path d="M1199 157V142A17 15 0 0 1 1216 157Z" fill="#e14bb0"/><path d="M1199 157H1216A17 15 0 0 1 1199 172Z" fill="#f29a2a"/><path d="M1199 157V172A17 15 0 0 1 1182 157Z" fill="#7ac943"/><path d="M1224 148H1248M1224 156H1248M1224 166H1248" stroke="#ccc" stroke-width="3"/></svg>
<svg viewBox="1305.600 78 178.200 282" preserveAspectRatio="none"><ellipse cx="1392" cy="209" rx="72" ry="92" fill="#fbfbfd" stroke="url(#gRing)" stroke-width="7"/><path d="M1374 160L1426 148V242C1426 258 1400 258 1400 242C1400 232 1410 226 1418 228V174L1382 183V254C1382 272 1352 272 1352 254C1352 242 1364 236 1374 240Z" fill="url(#gNote)"/></svg>
<svg viewBox="-36.800 78 178.200 282" preserveAspectRatio="none"><ellipse cx="52" cy="209" rx="73" ry="93" fill="url(#gOrange)" stroke="#eee" stroke-width="4"/><path d="M8 172Q30 158 50 174V258Q30 240 8 250ZM97 172Q75 158 55 174V258Q75 240 97 250Z" fill="#f4f4f4"/></svg>
<svg viewBox="141.400 78 178.200 282" preserveAspectRatio="none"><ellipse cx="228" cy="209" rx="73" ry="93" fill="url(#gBlue)" stroke="#eee" stroke-width="4"/><g stroke="#f7f7f7" fill="none"><path d="M177 209H279" stroke-width="10"/><path d="M220 174L186 250" stroke-width="10" stroke-linecap="round"/><path d="M228 154L262 232M264 236L272 254" stroke-width="12" stroke-linecap="round"/></g><ellipse cx="283" cy="141" rx="31" ry="40" fill="#ee3d3b"/><text x="283" y="155" font-size="40" text-anchor="middle" fill="#fff" textLength="17" lengthAdjust="spacingAndGlyphs">6</text></svg>
<svg viewBox="319.600 78 178.200 282" preserveAspectRatio="none"><rect x="334" y="123" width="148" height="174" rx="5" fill="url(#gSilver)"/><ellipse cx="408" cy="209" rx="60" ry="77" fill="#2d2e30"/><ellipse cx="408" cy="209" rx="50" ry="65" fill="none" stroke="#b9bcbe" stroke-width="9" stroke-dasharray="6 5"/><ellipse cx="408" cy="209" rx="40" ry="52" fill="none" stroke="#b9bcbe" stroke-width="8"/><path d="M408 209H448M408 209L386 166M408 209L386 252" stroke="#b9bcbe" stroke-width="9"/><ellipse cx="408" cy="209" rx="10" ry="13" fill="#cfd2d4"/></svg>
<svg viewBox="497.800 78 178.200 282" preserveAspectRatio="none" fill="none" stroke-linecap="round" stroke-linejoin="round"><path d="M644 146L629 274" stroke="#1779b6" stroke-width="28"/><path d="M590 180L629 274" stroke="#2aa9e4" stroke-width="28"/><path d="M560 282L590 180" stroke="#1779b6" stroke-width="28"/><path d="M525 140L556 280" stroke="#25a9e0" stroke-width="30"/></svg>
<svg viewBox="676 78 178.200 282" preserveAspectRatio="none" fill="none"><path d="M786 152Q806 164 800 180Q790 200 757 199V236Q830 236 826 180Q822 150 786 152Z" fill="#b8371d"/><path d="M733 117H776Q826 122 826 184V200Q820 160 786 158H733Q715 156 715 138T733 117Z" fill="#f25a30"/><path d="M757 199H736Q718 202 718 222V288Q718 305 737 305T756 288V236Z" fill="#f0502a"/></svg>
<svg viewBox="854.200 78 178.200 282" preserveAspectRatio="none" fill="none" stroke-linecap="round"><path d="M982 142L902 284" stroke="#2e8b3a" stroke-width="34"/><path d="M898 138L984 276" stroke="#58bd4b" stroke-width="36"/><path d="M932 232L900 286" stroke="#43a540" stroke-width="34"/></svg>
<svg viewBox="1032.400 78 178.200 282" preserveAspectRatio="none"><rect x="1078" y="134" width="90" height="150" rx="45" fill="none" stroke="url(#gO)" stroke-width="32"/><path d="M1094 150Q1124 120 1152 160M1092 260Q1104 284 1130 280" fill="none" stroke="#c8951a" stroke-width="6" opacity=".5"/></svg>
<svg viewBox="1210.600 78 178.200 282" preserveAspectRatio="none"><rect x="1219" y="121" width="157" height="171" fill="#1d1d1d"/><path d="M1219 244Q1290 180 1376 166V136H1219Z" fill="#343434"/><path d="M1219 121H1376V135H1219Z" fill="#e6e6e6"/><path d="M1219 278H1376V291H1219Z" fill="#8e8e8e"/><path d="M1219 278H1252V291H1219Z" fill="#bbb"/><text x="1240" y="196" font-size="46" text-anchor="middle" fill="#2fe23f" textLength="20" lengthAdjust="spacingAndGlyphs">$</text><rect x="1259" y="153" width="21" height="49" fill="#22b430"/><ellipse cx="1297" cy="336" rx="10" ry="12"/></svg>
<svg viewBox="1388.800 78 178.200 282" preserveAspectRatio="none"><path d="M1410 266Q1414 308 1478 308T1546 266Z" fill="#d0d0d0"/><ellipse cx="1478" cy="260" rx="67" ry="32" fill="#f4f4f4"/><ellipse cx="1478" cy="260" rx="60" ry="27" fill="#5fae6e"/><path d="M1478 233Q1538 236 1538 260Q1530 284 1490 287Z" fill="#e88a2a"/><ellipse cx="1478" cy="180" rx="57" ry="68" fill="url(#gGlobe)"/><path d="M1436 146Q1452 128 1474 134L1466 160L1448 170ZM1500 134Q1526 150 1530 184L1512 180L1496 156Z" fill="#e8f2fb" opacity=".8"/><path d="M1478 160L1512 202H1496V246H1526L1480 302L1430 248H1458V202H1444Z" fill="#bcd95a" opacity=".88"/><path d="M1458 204H1500V214H1458Z" fill="#2c66b0"/></svg>
<svg viewBox="93.900 78 178.200 282" preserveAspectRatio="none"><path d="M112 134H250L260 288Q260 296 254 296H106Q100 296 101 288Z" fill="#dcdcdc"/><path d="M126 120H238Q246 120 247 128L252 270Q252 276 246 276H118Q110 276 110 270L116 128Q118 120 126 120Z" fill="#2e2e2e"/><path d="M126 120H238Q246 120 247 128L251 252H111L116 128Q118 120 126 120Z" fill="url(#gDark)"/><path d="M204 162Q184 148 164 160Q152 178 176 186Q210 192 202 210Q184 226 156 214" fill="none" stroke="#ff9a2c" stroke-width="13"/><ellipse cx="180" cy="336" rx="10" ry="12"/></svg>
<svg viewBox="272.100 78 178.200 282" preserveAspectRatio="none"><rect x="280" y="105" width="161" height="198" fill="#f2371f"/><rect x="287" y="113" width="147" height="182" fill="#2b0204"/><path d="M316 262C336 250 366 196 362 160C360 138 346 142 352 164C358 190 384 234 408 234C418 222 372 216 340 234C322 244 308 256 316 262Z" fill="none" stroke="#fff" stroke-width="4.500"/><ellipse cx="361" cy="336" rx="10" ry="12"/></svg>
<svg viewBox="450.300 78 178.200 282" preserveAspectRatio="none"><ellipse cx="538" cy="142" rx="30" ry="37" fill="none" stroke="#a8a8a8" stroke-width="5"/><path d="M508 222L490 290M542 206L548 304M560 206L586 278" stroke="#aeb0b2" stroke-width="11"/><path d="M520 226L506 292M540 280H556M574 268L582 262" stroke="#8b8d8f" stroke-width="6"/><ellipse cx="554" cy="184" rx="24" ry="30" fill="#a3a5a7"/><ellipse cx="550" cy="168" rx="6" ry="7" fill="#444"/><ellipse cx="497" cy="175" rx="37" ry="46" fill="#f88b22" stroke="#e8e8e8" stroke-width="3"/><rect x="482" y="182" width="22" height="20" fill="#fff" transform="rotate(-12 493 192)"/><path d="M500 184Q496 168 506 170Q512 172 512 182" fill="none" stroke="#fff" stroke-width="4"/><ellipse cx="503" cy="146" rx="10" ry="12" fill="#555" stroke="#e8e8e8" stroke-width="4"/><ellipse cx="537" cy="336" rx="10" ry="12"/></svg>
<svg viewBox="628.500 78 178.200 282" preserveAspectRatio="none"><path d="M652 130L764 109L786 284L673 306Z" fill="#fbfbfb"/><path d="M656 150L766 129M658 163L768 142M660 176L770 155M661 189L771 168M663 202L773 181M664 215L775 194M666 228L776 207M668 241L778 220M669 254L780 233M671 267L781 246M672 280L783 259" stroke="#ccd" stroke-width="2"/><path d="M668 128L690 302" stroke="#f2a8a8" stroke-width="1.500"/><path d="M770 112L782 116L748 282L737 278Z" fill="#7e9db8"/><path d="M774 114L779 116L745 280L741 279Z" fill="#d8e6f0"/><path d="M737 278L748 282L733 304Z" fill="#555"/><ellipse cx="717" cy="336" rx="10" ry="12"/></svg>
<svg viewBox="806.700 78 178.200 282" preserveAspectRatio="none"><path d="M816 162C806 118 842 98 866 118C930 108 976 160 966 222C984 270 950 324 912 304C850 312 812 252 822 196Q816 180 816 162Z" fill="#1fa9ea"/><path d="M922 178Q912 156 892 156Q864 158 864 182Q866 202 892 208Q924 214 924 236Q920 264 892 264Q866 262 862 240" fill="none" stroke="#fff" stroke-width="18"/><ellipse cx="948" cy="141" rx="31" ry="40" fill="#ee3d3b"/><text x="948" y="154" font-size="38" text-anchor="middle" fill="#fff" textLength="15" lengthAdjust="spacingAndGlyphs">1</text><ellipse cx="893" cy="336" rx="10" ry="12"/></svg>
<div class="sep"><i></i></div>
<svg viewBox="1058.500 78 178.200 282" preserveAspectRatio="none"><path d="M1101 105H1158L1214 160V276H1101Z" fill="#f2f2f2"/><path d="M1098 226L1140 248L1203 226V276L1140 304L1098 276Z" fill="#8f5526"/><path d="M1140 248L1203 226V276L1140 304Z" fill="#7a451c"/><path d="M1098 170L1148 140L1202 166L1200 204L1140 232L1100 204Z" fill="#e9c531"/><path d="M1098 170L1148 140L1202 166L1148 196Z" fill="#f5dc6a"/><path d="M1098 162L1086 178L1100 198ZM1202 148L1222 174L1200 198Z" fill="#d89a66"/><path d="M1096 196L1138 230L1114 248L1074 206ZM1140 230L1202 200L1218 230L1162 262Z" fill="#cf8a55"/></svg>
<svg class="bin" viewBox="1241.500 78 178.200 282" preserveAspectRatio="none"><path d="M1270 132L1390 132L1376 294Q1374 306 1360 306H1304Q1290 306 1288 294Z" fill="url(#gBin)"/><path d="M1272 128L1290 112L1306 118L1320 108L1340 116L1356 110L1372 124L1388 130L1386 148L1330 156L1276 148Z" fill="#e9e9e9"/><path d="M1284 134L1304 118L1312 140ZM1336 118L1360 138L1342 150ZM1368 124L1380 140L1364 142Z" fill="#444"/><path d="M1306 134L1324 128L1322 150Z" fill="#4ab0a0"/><path d="M1340 130L1350 126V138Z" fill="#c84a4a"/><path d="M1270 130Q1276 152 1330 154T1390 130" fill="none" stroke="#c9c9c9" stroke-width="4"/><path d="M1296 170Q1330 180 1366 168M1294 190L1316 292M1366 190L1346 292" stroke="#c6c6c6" stroke-width="4" fill="none" opacity=".6"/></svg>
</footer>
</body>
</html>
